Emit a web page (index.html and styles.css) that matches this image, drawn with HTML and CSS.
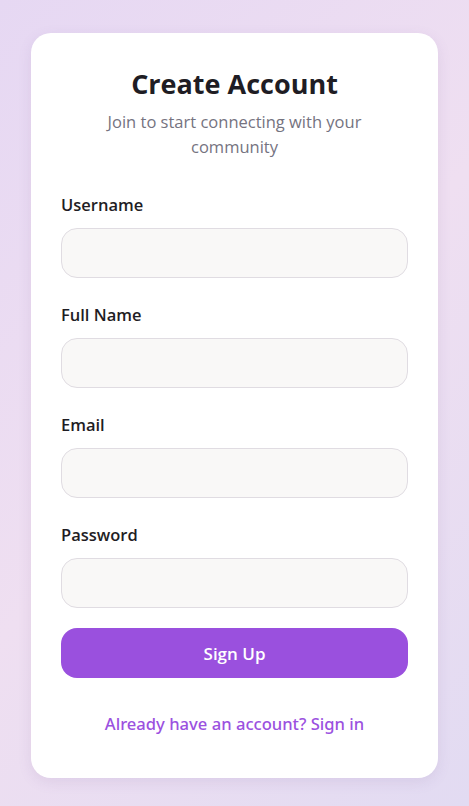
FILE: index.html
```html
<!DOCTYPE html>
<html lang="en">
<head>
  <meta charset="UTF-8">
  <meta name="viewport" content="width=device-width, initial-scale=1.0">
  <title>Create Account</title>
  <link rel="stylesheet" href="styles.css">
</head>
<body>
  <div class="card">
    <h1>Create Account</h1>
    <p class="subtitle">Join to start connecting with your community</p>
    <form class="signup-form" onsubmit="event.preventDefault()">
      <div class="field">
        <label for="username">Username</label>
        <input type="text" id="username">
      </div>
      <div class="field">
        <label for="fullname">Full Name</label>
        <input type="text" id="fullname">
      </div>
      <div class="field">
        <label for="email">Email</label>
        <input type="email" id="email">
      </div>
      <div class="field">
        <label for="password">Password</label>
        <input type="password" id="password">
      </div>
      <button type="submit">Sign Up</button>
    </form>
    <a href="#" class="signin-link">Already have an account? Sign in</a>
  </div>
</body>
</html>
```

FILE: styles.css
```css
html, body {
  margin: 0;
}
body {
  font-family: "Open Sans", "Noto Sans", sans-serif;
  min-height: 806px;
  padding: 33px 31px 29px;
  box-sizing: border-box;
  background: linear-gradient(135deg, #e6d8f3 0%, #efdff1 50%, #e2dbf2 100%);
  color: #1f1d24;
}
.card {
  background-color: #fff;
  border-radius: 20px;
  box-shadow: 0 4px 14px rgba(120, 90, 160, 0.12);
  padding: 34px 30px 42px;
  display: flex;
  flex-direction: column;
  align-items: stretch;
}
h1 {
  font-size: 27px;
  line-height: 34px;
  font-weight: 700;
  text-align: center;
  margin: 0 0 8px;
  color: #1f1d24;
}
.subtitle {
  font-size: 16.5px;
  line-height: 25px;
  text-align: center;
  color: #75737f;
  margin: 0 0 34px;
  padding: 0 40px;
}
.signup-form {
  display: flex;
  flex-direction: column;
  gap: 25px;
}
.field {
  display: flex;
  flex-direction: column;
  gap: 11px;
}
label {
  font-size: 16.5px;
  line-height: 24px;
  font-weight: 600;
  color: #1f1d24;
}
input {
  height: 50px;
  border: 1px solid #e0dce2;
  border-radius: 16px;
  background-color: #f9f8f7;
  padding: 0 16px;
  box-sizing: border-box;
  font: inherit;
}
input:focus {
  border-color: #9b51e0;
  outline: none;
}
button {
  height: 50px;
  margin-top: -5px;
  border: none;
  border-radius: 16px;
  background-color: #9a50de;
  color: #fff;
  font-family: inherit;
  font-size: 17px;
  font-weight: 600;
  cursor: pointer;
}
.signin-link {
  margin-top: 34px;
  text-align: center;
  font-family: "Noto Sans", "Open Sans", sans-serif;
  font-size: 16.6px;
  line-height: 24px;
  font-weight: 500;
  color: #9b51e0;
  text-decoration: none;
}
```
